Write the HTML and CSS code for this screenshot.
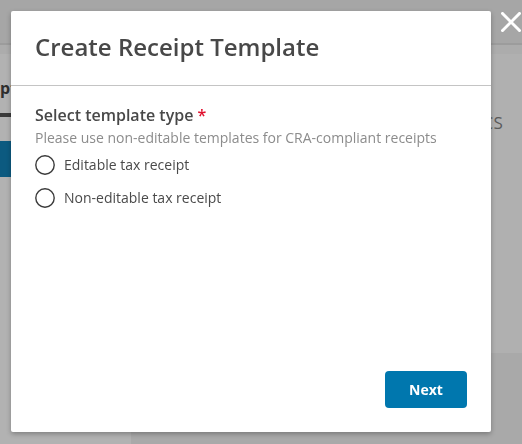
FILE: index.html
```html
<!DOCTYPE html>
<html lang="en">
<head>
<meta charset="utf-8">
<title>Create Receipt Template</title>
<link rel="stylesheet" href="styles.css">
</head>
<body>
<div class="page">
  <header class="topbar"></header>
  <div class="subbar"></div>
  <div class="main">
    <aside class="sidebar">
      <div class="side-title">pt<span class="side-badge"></span></div>
      <div class="side-tabline"></div>
      <div class="side-button"></div>
    </aside>
    <section class="content">
      <div class="card">
        <div class="card-tabs">STATISTICS</div>
      </div>
    </section>
  </div>
</div>

<div class="modal" role="dialog" aria-labelledby="modal-title">
  <div class="modal-header">
    <h1 class="modal-title" id="modal-title">Create Receipt Template</h1>
  </div>
  <div class="modal-body">
    <div class="field-label">Select template type <span class="required">*</span></div>
    <div class="field-help">Please use non-editable templates for CRA-compliant receipts</div>
    <div class="radio-list">
      <label class="radio-row">
        <svg class="radio-icon" width="20" height="20" viewBox="0 0 20 20"><circle cx="10" cy="10" r="9.2" fill="#fff" stroke="#3a3a3a" stroke-width="1.4"/></svg>
        <span class="radio-text">Editable tax receipt</span>
      </label>
      <label class="radio-row">
        <svg class="radio-icon" width="20" height="20" viewBox="0 0 20 20"><circle cx="10" cy="10" r="9.2" fill="#fff" stroke="#3a3a3a" stroke-width="1.4"/></svg>
        <span class="radio-text">Non-editable tax receipt</span>
      </label>
    </div>
  </div>
  <div class="modal-footer">
    <button class="btn-primary" type="button">Next</button>
  </div>
</div>

<button class="modal-close" type="button" aria-label="Close">
  <svg width="20" height="20" viewBox="0 0 20 20"><path d="M1.5 1.5 L18.5 18.5 M18.5 1.5 L1.5 18.5" stroke="#fff" stroke-width="3" stroke-linecap="square"/></svg>
</button>
</body>
</html>
```

FILE: styles.css
```css
* { box-sizing: border-box; }

html, body {
  margin: 0;
  padding: 0;
  height: 100%;
}

body {
  font-family: "Open Sans", "Noto Sans", sans-serif;
  background: #a9a9a9;
  overflow: hidden;
}

.page {
  display: flex;
  flex-direction: column;
  height: 100%;
}

.topbar {
  height: 45px;
  background: #a6a6a6;
  border-bottom: 2px solid #9c9c9c;
  flex: none;
}

.subbar {
  height: 9px;
  background: #acacac;
  flex: none;
}

.main {
  flex: 1;
  display: flex;
}

.sidebar {
  width: 131px;
  background: #b2b2b2;
  flex: none;
  overflow: hidden;
  padding-top: 24px;
}

.side-title {
  font-size: 16px;
  font-weight: 700;
  color: #2e2e2e;
  line-height: 20px;
  white-space: nowrap;
  display: flex;
  align-items: center;
}

.side-badge {
  display: inline-block;
  width: 12px;
  height: 12px;
  margin-left: 1px;
  border-left: 1px solid #b58a3a;
}

.side-tabline {
  height: 4px;
  background: #3a3a3a;
  margin-top: 15px;
  width: 100%;
}

.side-button {
  height: 36px;
  background: #0c5a80;
  margin-top: 24px;
  width: 100%;
}

.content {
  flex: 1;
}

.card {
  height: 299px;
  background: #b0b0b0;
  margin-left: 10px;
  padding-top: 57px;
  display: flex;
  justify-content: flex-end;
}

.card-tabs {
  font-size: 17px;
  color: #5a5a5a;
  line-height: 24px;
  height: 24px;
  margin-right: 19px;
  letter-spacing: 0.2px;
}

/* Modal */
.modal {
  position: fixed;
  top: 11px;
  left: 11px;
  width: 480px;
  height: 421px;
  background: #fff;
  border-radius: 2px;
  box-shadow: 0 2px 5px rgba(0, 0, 0, 0.28);
  display: flex;
  flex-direction: column;
}

.modal-header {
  height: 75px;
  border-bottom: 1px solid #c4c4c4;
  display: flex;
  align-items: center;
  padding: 0 24px 2px 24px;
  flex: none;
}

.modal-title {
  margin: 0;
  font-size: 24px;
  font-weight: 600;
  color: #484848;
  line-height: 32px;
}

.modal-body {
  flex: 1;
  padding: 18px 24px 0 24px;
}

.field-label {
  font-size: 16px;
  font-weight: 600;
  color: #484848;
  line-height: 22px;
}

.required {
  color: #e0102e;
}

.field-help {
  margin-top: 2px;
  font-size: 14px;
  color: #8c8c8c;
  line-height: 20px;
}

.radio-list {
  margin-top: 7px;
  display: flex;
  flex-direction: column;
  gap: 13px;
}

.radio-row {
  display: flex;
  align-items: center;
  gap: 9px;
  height: 20px;
  cursor: pointer;
}

.radio-icon {
  flex: none;
  display: block;
}

.radio-text {
  font-size: 14px;
  color: #4a4a4a;
  line-height: 20px;
}

.modal-footer {
  display: flex;
  justify-content: flex-end;
  padding: 0 24px 24px 24px;
  flex: none;
}

.btn-primary {
  width: 82px;
  height: 37px;
  border: none;
  border-radius: 4px;
  background: #0077ae;
  color: #fff;
  font-family: "Open Sans", "Noto Sans", sans-serif;
  font-size: 14px;
  font-weight: 700;
  cursor: pointer;
}

.modal-close {
  position: fixed;
  top: 11px;
  left: 500px;
  width: 21px;
  height: 21px;
  padding: 0;
  border: none;
  background: transparent;
  display: flex;
  align-items: center;
  justify-content: center;
  cursor: pointer;
}
```
